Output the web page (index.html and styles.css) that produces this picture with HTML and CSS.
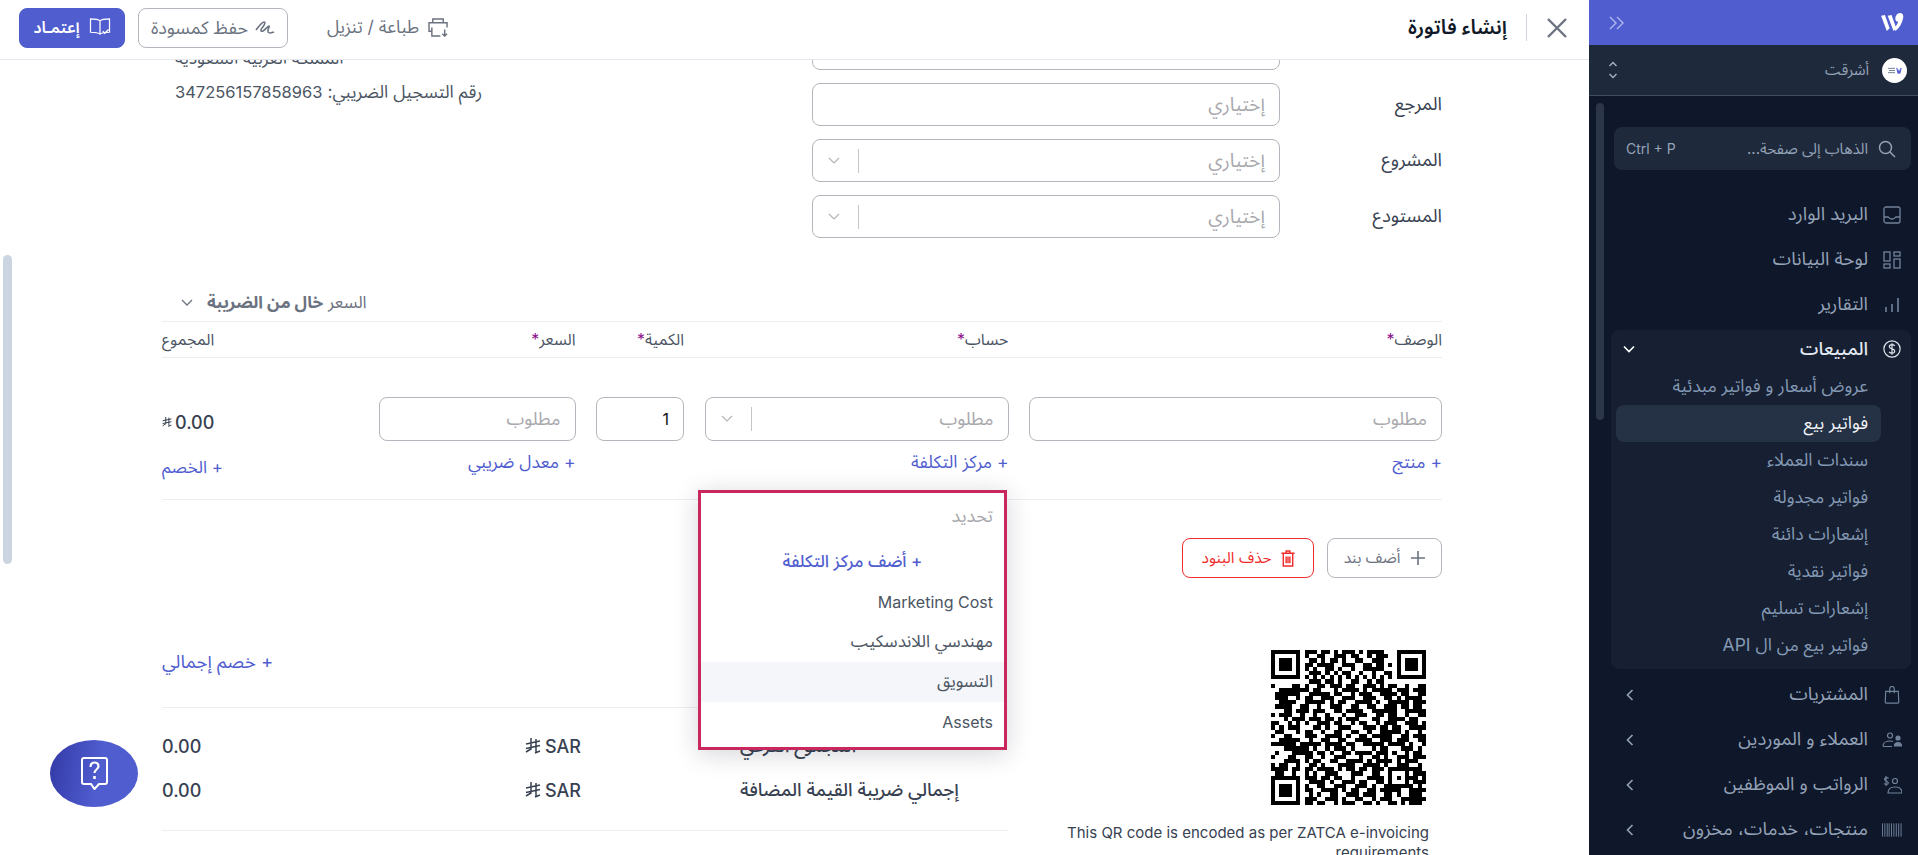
FILE: index.html
```html
<!DOCTYPE html>
<html lang="ar" dir="rtl">
<head>
<meta charset="utf-8">
<title>إنشاء فاتورة</title>
<link rel="stylesheet" href="styles.css">
</head>
<body>
<div class="app">
  <aside class="side">
    <div class="brand">
      <svg class="logo" viewBox="0 0 24 20" width="23" height="19"><path fill="#fff" d="M0 3l4-1 5 14-3 3zM7 3l4-1 5 14-3 3z"/><path fill="#fff" d="M15 6c0-3 2-6 5-6 3 0 4 3 3 6-1 5-4 10-8 13l-1-4c2-1 3-3 4-6-2 0-3-1-3-3z"/></svg>
      <svg class="expand" viewBox="0 0 16 14" width="16" height="14" fill="none" stroke="#aeb6ee" stroke-width="1.4"><path d="M1 1l6 6-6 6M8 1l6 6-6 6"/></svg>
    </div>
    <div class="org">
      <span class="org-logo"><svg viewBox="0 0 16 8" width="14" height="7"><rect x="0" y="1" width="8" height="1" fill="#64748b"/><rect x="1" y="3.500" width="7" height="1" fill="#64748b"/><rect x="0" y="6" width="8" height="1" fill="#64748b"/><path d="M10 1l1.500 6 1-3 1 3 1.500-6" fill="none" stroke="#505dcf" stroke-width="1.300"/></svg></span>
      <span class="org-name">أشرقت</span>
      <svg class="updown" viewBox="0 0 10 18" width="10" height="18" fill="none" stroke="#a3aebd" stroke-width="1.5"><path d="M1.5 5L5 1.5 8.5 5M1.5 13L5 16.5 8.5 13"/></svg>
    </div>
    <div class="side-body">
      <div class="search">
        <svg viewBox="0 0 18 18" width="18" height="18" fill="none" stroke="#94a3b8" stroke-width="1.5"><circle cx="7.5" cy="7.5" r="6"/><path d="M12 12l5 5"/></svg>
        <span class="search-text">الذهاب إلى صفحة...</span>
        <span class="search-key" dir="ltr">Ctrl + P</span>
      </div>
      <nav class="nav">
        <a class="item">
          <svg class="ic" viewBox="0 0 18 18" fill="none" stroke="#71839b" stroke-width="1.3"><rect x="1" y="1" width="16" height="16" rx="2"/><path d="M1 11h4c1 0 1 2 4 2s3-2 4-2h4"/></svg>
          <span>البريد الوارد</span>
        </a>
        <a class="item">
          <svg class="ic" viewBox="0 0 18 18" fill="none" stroke="#71839b" stroke-width="1.3"><rect x="1" y="1" width="6" height="9"/><rect x="11" y="1" width="6" height="4"/><rect x="1" y="13" width="6" height="4"/><rect x="11" y="8" width="6" height="9"/></svg>
          <span>لوحة البيانات</span>
        </a>
        <a class="item">
          <svg class="ic" viewBox="0 0 18 18" fill="none" stroke="#71839b" stroke-width="1.6"><path d="M3 16v-5M9 16V8M15 16V2"/></svg>
          <span>التقارير</span>
        </a>
        <div class="group">
          <a class="item head">
            <svg class="ic" viewBox="0 0 20 20" fill="none" stroke="#e2e8f0" stroke-width="1.3"><circle cx="10" cy="10" r="9"/><path d="M13 6.500c-.6-1-1.700-1.300-3-1.300-1.700 0-3 .8-3 2.300 0 3.200 6 1.500 6 4.800 0 1.500-1.400 2.400-3 2.400-1.400 0-2.500-.4-3.200-1.500M10 3.500v13"/></svg>
            <span>المبيعات</span>
            <svg class="chev" viewBox="0 0 12 12" fill="none" stroke="#fff" stroke-width="1.6"><path d="M1 3.500l5 5 5-5"/></svg>
          </a>
          <a class="sub">عروض أسعار و فواتير مبدئية</a>
          <a class="sub active">فواتير بيع</a>
          <a class="sub">سندات العملاء</a>
          <a class="sub">فواتير مجدولة</a>
          <a class="sub">إشعارات دائنة</a>
          <a class="sub">فواتير نقدية</a>
          <a class="sub">إشعارات تسليم</a>
          <a class="sub">فواتير بيع من ال API</a>
        </div>
        <a class="item">
          <svg class="ic" viewBox="0 0 18 20" fill="none" stroke="#71839b" stroke-width="1.3"><path d="M2 6h14l.5 12a1 1 0 0 1-1 1h-13a1 1 0 0 1-1-1zM6.500 8V3a2.500 2.500 0 0 1 5 0v5"/></svg>
          <span>المشتريات</span>
          <svg class="chev" viewBox="0 0 12 12" fill="none" stroke="#94a3b8" stroke-width="1.6"><path d="M8.500 1l-5 5 5 5"/></svg>
        </a>
        <a class="item">
          <svg class="ic wide" viewBox="0 0 20 16" fill="none" stroke="#71839b" stroke-width="1.200"><circle cx="8" cy="3.500" r="2.500"/><path d="M1 14c0-3 3-5 7-5 1 0 2 .1 3 .5M1 14.500h9"/><circle cx="16" cy="6" r="2" fill="#71839b"/><path d="M12.500 14c0-2 1.500-3.500 3.500-3.500s3.500 1.500 3.500 3.500z" fill="#71839b"/></svg>
          <span>العملاء و الموردين</span>
          <svg class="chev" viewBox="0 0 12 12" fill="none" stroke="#94a3b8" stroke-width="1.6"><path d="M8.500 1l-5 5 5 5"/></svg>
        </a>
        <a class="item">
          <svg class="ic wide" viewBox="0 0 20 18" fill="none" stroke="#71839b" stroke-width="1.200"><path d="M6.500 2.500C6 1.500 3 1 2.500 3c-.5 2 4 2 3.800 4-.2 1.800-3.500 1.700-4.300.5M4 0v10"/><circle cx="13" cy="5" r="2.500"/><path d="M6 17c0-4 3-6 7-6s7 2 7 6z"/></svg>
          <span>الرواتب و الموظفين</span>
          <svg class="chev" viewBox="0 0 12 12" fill="none" stroke="#94a3b8" stroke-width="1.6"><path d="M8.500 1l-5 5 5 5"/></svg>
        </a>
        <a class="item">
          <svg class="ic wide" viewBox="0 0 21 14" fill="none" stroke="#71839b" stroke-width="1"><path d="M.5 0v14M3 0v14M5.500 0v14M7.500 0v14M10 0v14M12.500 0v14M15 0v14M17.500 0v14M20 0v14"/></svg>
          <span>منتجات، خدمات، مخزون</span>
          <svg class="chev" viewBox="0 0 12 12" fill="none" stroke="#94a3b8" stroke-width="1.6"><path d="M8.500 1l-5 5 5 5"/></svg>
        </a>
      </nav>
      <span class="side-thumb"></span>
    </div>
  </aside>

  <main class="main">
    <header class="top">
      <svg class="close" viewBox="0 0 20 20" width="20" height="20" fill="none" stroke="#6b7280" stroke-width="2.400"><path d="M1 1l18 18M19 1L1 19"/></svg>
      <span class="top-div"></span>
      <h1 class="title">إنشاء فاتورة</h1>
      <span class="print">
        <svg viewBox="0 0 22 20" width="21" height="19" fill="none" stroke="#6b7280" stroke-width="1.500"><path d="M5 5V1h11v4M4 14H1V5h19v5M4 10v9h9"/><path d="M17.500 12v7M15 16.500l2.500 2.500 2.500-2.500"/></svg>
        طباعة / تنزيل
      </span>
      <button class="btn draft">
        <svg viewBox="0 0 20 14" width="20" height="14" fill="none" stroke="#6b7280" stroke-width="1.600"><path d="M1 9C4 5 7 1 9 1s0 4-2 6-1 4 1 3 5-5 6-5-2 4-1 6 3 1 6 0"/></svg>
        حفظ كمسودة
      </button>
      <button class="btn approve">
        <svg viewBox="0 0 22 20" width="22" height="19" fill="none" stroke="#fff" stroke-width="1.300"><path d="M11 3c-2-2-5-2-10-2v14c5 0 8 0 10 2 2-2 5-2 10-2V1c-5 0-8 0-10 2zM11 3v14"/><path d="M14 14l2 2 4-4" stroke-width="1.500"/></svg>
        إعتمـاد
      </button>
    </header>

    <div class="scroll">
      <div class="sheet">
        <section class="meta">
          <div class="form">
            <span class="label"></span><div class="field"></div>
            <span class="label">المرجع</span><div class="field"><span class="ph">إختياري</span></div>
            <span class="label">المشروع</span><div class="field"><span class="ph">إختياري</span><i class="sep"></i><svg class="dd" viewBox="0 0 12 8" fill="none" stroke="#b3b3b8" stroke-width="1.200"><path d="M1 1l5 5 5-5"/></svg></div>
            <span class="label">المستودع</span><div class="field"><span class="ph">إختياري</span><i class="sep"></i><svg class="dd" viewBox="0 0 12 8" fill="none" stroke="#b3b3b8" stroke-width="1.200"><path d="M1 1l5 5 5-5"/></svg></div>
          </div>
          <div class="addr">
            <p>المملكة العربية السعودية</p>
            <p>رقم التسجيل الضريبي: <span class="num">347256157858963</span></p>
          </div>
        </section>

        <div class="tax">
          <span>السعر <b>خال من الضريبة</b></span>
          <svg viewBox="0 0 12 8" width="12" height="8" fill="none" stroke="#6b7280" stroke-width="1.300"><path d="M1 1l5 5 5-5"/></svg>
        </div>

        <div class="cols head-row">
          <span>الوصف<em>*</em></span>
          <span>حساب<em>*</em></span>
          <span>الكمية<em>*</em></span>
          <span>السعر<em>*</em></span>
          <span class="end">المجموع</span>
        </div>

        <div class="cols line">
          <div class="cell">
            <div class="field"><span class="ph req">مطلوب</span></div>
            <a class="link">+ منتج</a>
          </div>
          <div class="cell">
            <div class="field"><span class="ph req">مطلوب</span><i class="sep"></i><svg class="dd" viewBox="0 0 12 8" fill="none" stroke="#b3b3b8" stroke-width="1.200"><path d="M1 1l5 5 5-5"/></svg></div>
            <a class="link">+ مركز التكلفة</a>
          </div>
          <div class="cell">
            <div class="field"><span class="val">1</span></div>
          </div>
          <div class="cell">
            <div class="field"><span class="ph req">مطلوب</span></div>
            <a class="link">+ معدل ضريبي</a>
          </div>
          <div class="cell sum">
            <div class="amount" dir="ltr">
              <svg class="riyal small" viewBox="0 0 16 16" fill="none" stroke="currentColor" stroke-width="1.600"><path d="M6 0v11l-5 3M11 1v13M1 6l14-3M1 10.500l14-3M10 15l5-2"/></svg>
              <span>0.00</span>
            </div>
            <a class="link disc">+ الخصم</a>
          </div>
        </div>

        <div class="actions">
          <button class="btn add">
            <svg viewBox="0 0 14 14" width="14" height="14" fill="none" stroke="#6b7280" stroke-width="1.600"><path d="M7 0v14M0 7h14"/></svg>
            أضف بند
          </button>
          <button class="btn del">
            <svg viewBox="0 0 14 18" width="14" height="17" fill="none" stroke="#ef2b2b" stroke-width="1.500"><path d="M0 3.500h14M5 3V1h4v2M2 4v13h10V4M5 7v7M7 7v7M9 7v7"/></svg>
            حذف البنود
          </button>
        </div>

        <section class="bottom">
          <div class="qr-box">
            <svg class="qr" viewBox="0 0 37 37" shape-rendering="crispEdges">
              <path fill-rule="evenodd" d="M0 0h7v7h-7zM1 1v5h5v-5zM2 2h3v3h-3zM30 0h7v7h-7zM31 1v5h5v-5zM32 2h3v3h-3zM0 30h7v7h-7zM1 31v5h5v-5zM2 32h3v3h-3zM28 28h5v5h-5zM29 29v3h3v-3zM30 30h1v1h-1z"/>
              <path fill="none" stroke="#000" d="M8 .5h3M12 .5h2M15 .5h1M17 .5h3M21 .5h1M23 .5h4M8 1.500h1M11 1.500h2M15 1.500h3M19 1.500h2M23 1.500h1M25 1.500h3M9 2.500h2M12 2.500h1M14 2.500h2M17 2.500h1M20 2.500h2M24 2.500h3M8 3.500h2M11 3.500h4M17 3.500h3M22 3.500h2M25 3.500h2M28 3.500h1M8 4.500h1M10 4.500h1M13 4.500h2M16 4.500h1M19 4.500h1M22 4.500h5M9 5.500h3M13 5.500h1M15 5.500h1M17 5.500h2M21 5.500h1M24 5.500h1M27 5.500h2M8 6.500h1M10 6.500h1M12 6.500h1M14 6.500h1M16 6.500h1M18 6.500h1M20 6.500h1M22 6.500h1M24 6.500h1M26 6.500h1M28 6.500h1M9 7.500h3M13 7.500h2M16 7.500h1M19 7.500h2M23 7.500h1M25 7.500h2M0 8.500h1M5 8.500h2M8 8.500h1M11 8.500h2M14 8.500h3M18 8.500h2M22 8.500h3M26 8.500h1M28 8.500h2M32 8.500h1M35 8.500h2M2 9.500h7M10 9.500h2M15 9.500h1M17 9.500h4M22 9.500h1M24 9.500h5M30 9.500h3M34 9.500h3M1 10.500h6M9 10.500h5M15 10.500h2M19 10.500h1M21 10.500h3M26 10.500h4M31 10.500h2M35 10.500h2M1 11.500h3M6 11.500h1M8 11.500h2M12 11.500h3M17 11.500h3M22 11.500h3M27 11.500h2M30 11.500h1M32 11.500h4M2 12.500h4M8 12.500h5M14 12.500h1M16 12.500h2M20 12.500h4M25 12.500h1M28 12.500h5M34 12.500h3M1 13.500h4M7 13.500h2M11 13.500h1M14 13.500h3M19 13.500h2M23 13.500h2M27 13.500h3M31 13.500h2M34 13.500h2M3 14.500h2M6 14.500h3M10 14.500h3M15 14.500h2M18 14.500h4M24 14.500h6M32 14.500h5M0 15.500h1M2 15.500h3M7 15.500h1M10 15.500h1M13 15.500h1M17 15.500h1M20 15.500h3M25 15.500h2M28 15.500h2M32 15.500h1M35 15.500h2M3 16.500h1M5 16.500h3M9 16.500h3M13 16.500h2M16 16.500h1M18 16.500h3M24 16.500h2M28 16.500h4M33 16.500h2M0 17.500h2M4 17.500h1M6 17.500h1M8 17.500h1M11 17.500h3M15 17.500h2M19 17.500h1M21 17.500h2M25 17.500h1M27 17.500h3M32 17.500h3M36 17.500h1M0 18.500h1M2 18.500h1M4 18.500h3M10 18.500h2M13 18.500h1M16 18.500h3M22 18.500h3M26 18.500h2M29 18.500h2M33 18.500h4M1 19.500h2M6 19.500h1M8 19.500h2M12 19.500h1M15 19.500h2M19 19.500h2M23 19.500h1M26 19.500h5M32 19.500h1M35 19.500h1M0 20.500h1M3 20.500h2M8 20.500h3M13 20.500h4M18 20.500h1M21 20.500h2M24 20.500h5M31 20.500h2M34 20.500h3M2 21.500h5M9 21.500h1M12 21.500h2M16 21.500h2M20 21.500h4M26 21.500h3M30 21.500h3M35 21.500h2M0 22.500h6M7 22.500h5M13 22.500h4M18 22.500h2M22 22.500h5M28 22.500h4M33 22.500h1M36 22.500h1M3 23.500h6M10 23.500h1M13 23.500h1M15 23.500h3M19 23.500h1M24 23.500h1M26 23.500h2M31 23.500h3M35 23.500h1M1 24.500h1M5 24.500h5M11 24.500h2M14 24.500h1M17 24.500h2M20 24.500h4M25 24.500h3M29 24.500h1M32 24.500h1M34 24.500h2M0 25.500h1M4 25.500h2M8 25.500h2M12 25.500h1M15 25.500h3M21 25.500h1M24 25.500h2M27 25.500h1M30 25.500h3M34 25.500h3M3 26.500h4M8 26.500h1M10 26.500h2M14 26.500h2M18 26.500h4M23 26.500h1M25 26.500h4M30 26.500h1M32 26.500h3M0 27.500h1M2 27.500h2M6 27.500h1M9 27.500h2M12 27.500h1M16 27.500h4M22 27.500h4M27 27.500h1M30 27.500h3M35 27.500h1M0 28.500h4M5 28.500h2M8 28.500h2M11 28.500h4M16 28.500h1M18 28.500h2M21 28.500h2M24 28.500h3M33 28.500h3M1 29.500h2M5 29.500h1M8 29.500h1M10 29.500h1M13 29.500h3M19 29.500h3M24 29.500h2M34 29.500h3M8 30.500h3M12 30.500h2M15 30.500h2M19 30.500h1M23 30.500h4M33 30.500h2M36 30.500h1M9 31.500h4M14 31.500h1M17 31.500h3M21 31.500h2M25 31.500h2M34 31.500h3M8 32.500h1M11 32.500h2M15 32.500h3M20 32.500h3M24 32.500h1M27 32.500h1M33 32.500h1M35 32.500h1M8 33.500h2M12 33.500h4M17 33.500h1M19 33.500h2M23 33.500h2M26 33.500h5M33 33.500h4M9 34.500h1M11 34.500h1M14 34.500h2M18 34.500h3M22 34.500h3M27 34.500h2M30 34.500h1M33 34.500h3M8 35.500h3M13 35.500h3M17 35.500h1M20 35.500h2M24 35.500h1M26 35.500h3M31 35.500h6M8 36.500h2M11 36.500h2M15 36.500h1M17 36.500h3M22 36.500h2M25 36.500h1M28 36.500h2M31 36.500h1M33 36.500h3"/>
            </svg>
            <p class="qr-note">This QR code is encoded as per ZATCA e-invoicing requirements</p>
          </div>
          <div class="totals">
            <div class="disc-row"><a class="link">+ خصم إجمالي</a></div>
            <div class="tot-rows">
              <div class="tot">
                <span class="t-label">المجموع الفرعي</span>
                <span class="t-gap"></span>
                <span class="t-cur" dir="ltr"><svg class="riyal" viewBox="0 0 16 16" fill="none" stroke="currentColor" stroke-width="1.500"><path d="M6 0v11l-5 3M11 1v13M1 6l14-3M1 10.500l14-3M10 15l5-2"/></svg> SAR</span>
                <span class="t-val" dir="ltr">0.00</span>
              </div>
              <div class="tot">
                <span class="t-label">إجمالي ضريبة القيمة المضافة</span>
                <span class="t-gap"></span>
                <span class="t-cur" dir="ltr"><svg class="riyal" viewBox="0 0 16 16" fill="none" stroke="currentColor" stroke-width="1.500"><path d="M6 0v11l-5 3M11 1v13M1 6l14-3M1 10.500l14-3M10 15l5-2"/></svg> SAR</span>
                <span class="t-val" dir="ltr">0.00</span>
              </div>
            </div>
          </div>
        </section>
      </div>
    </div>

    <div class="menu">
      <div class="opt muted">تحديد</div>
      <div class="opt create">+ أضف مركز التكلفة</div>
      <div class="opt lat">Marketing Cost</div>
      <div class="opt">مهندسي اللاندسكيب</div>
      <div class="opt hover">التسويق</div>
      <div class="opt lat">Assets</div>
    </div>

    <span class="main-thumb"></span>
    <button class="fab">
      <svg viewBox="0 0 27 33" width="27" height="33" fill="none" stroke="#fff" stroke-width="2"><path d="M3 1h21a2 2 0 0 1 2 2v22a2 2 0 0 1-2 2h-6l-4.500 5L10 27H3a2 2 0 0 1-2-2V3a2 2 0 0 1 2-2z"/><path d="M9.500 10c0-3 1.700-4.500 4-4.500s4 1.500 4 3.800c0 3.200-4 3.200-4 6.700" stroke-width="2.200"/><path d="M13.500 19v3" stroke-width="2.600"/></svg>
    </button>
  </main>
</div>
</body>
</html>
```

FILE: styles.css
```css
* { box-sizing: border-box; }
html, body { margin: 0; height: 100%; overflow: hidden; }
body { font-family: Inter, "Noto Sans Arabic", "Noto Sans", sans-serif; background: #fff; color: #374151; font-size: 15px; }
p, h1 { margin: 0; }
a { text-decoration: none; }
button { font-family: inherit; cursor: pointer; }

.app { display: flex; height: 855px; }

/* Sidebar */
.side { width: 329px; flex: none; background: #0f172a; display: flex; flex-direction: column; }
.brand { height: 45px; background: #505dcf; display: flex; align-items: center; justify-content: space-between; padding: 0 14px 0 20px; flex: none; }
.org { height: 51px; background: #1e293b; border-bottom: 1px solid #414c5e; display: flex; align-items: center; padding: 0 11px 0 19px; gap: 13px; flex: none; }
.org-logo { width: 25px; height: 25px; border-radius: 50%; background: #fff; display: flex; align-items: center; justify-content: center; }
.org-name { font-size: 15px; color: #94a3b8; flex: 1; }
.side-body { position: relative; flex: 1; padding: 31px 7px 0 22px; min-height: 0; }
.side-thumb { position: absolute; top: 7px; left: 7px; width: 8px; height: 317px; border-radius: 4px; background: #2b3749; }
.search { height: 43px; margin-left: 3px; padding: 0 15px 0 12px; background: #1e293b; border-radius: 8px; display: flex; align-items: center; gap: 10px; color: #94a3b8; font-size: 14px; }
.search-text { flex: 1; font-size: 15px; }
.nav { margin-top: 22px; display: flex; flex-direction: column; }
.item { height: 45px; display: flex; align-items: center; padding: 0 10px 0 13px; color: #94a3b8; font-size: 18.5px; flex: none; }
.item span { flex: 1; }
.ic { width: 18px; height: 18px; margin-left: 15px; flex: none; }
.ic.wide { width: 20px; margin-right: -1px; margin-left: 14px; }
.chev { width: 12px; height: 12px; flex: none; }
.group { margin: 3px 0 3px; background: #162032; border-radius: 8px; padding-bottom: 5px; }
.head { height: 38px; color: #e2e8f0; font-weight: 500; padding-left: 12px; }
.sub { display: flex; align-items: center; height: 37px; margin: 0 30px 0 5px; padding-right: 13px; color: #8499b4; font-size: 17.5px; border-radius: 8px; }
.sub.active { background: #253144; color: #f1f5f9; }

/* Main */
.main { flex: 1; min-width: 0; position: relative; display: flex; flex-direction: column; }
.top { height: 60px; flex: none; border-bottom: 1px solid #e7e7f0; display: flex; align-items: center; padding: 0 22px 4px 19px; background: #fff; position: relative; z-index: 1; }
.close { flex: none; }
.top-div { width: 1px; height: 27px; background: #d1d5db; margin: 0 20px 0 19px; }
.title { font-size: 20px; font-weight: 600; color: #111827; flex: 1; }
.print { display: flex; align-items: center; gap: 9px; font-size: 17.5px; color: #6b7280; margin-left: 39px; }
.btn { height: 40px; border-radius: 8px; border: 1px solid #b5b5bd; background: #fff; display: flex; align-items: center; justify-content: center; gap: 9px; font-size: 16px; color: #6b7280; padding: 0; }
.draft { width: 150px; margin-left: 13px; font-size: 18px; gap: 7px; }
.approve { width: 106px; background: #505dcf; border-color: #505dcf; color: #fff; font-weight: 600; font-size: 16px; }

.scroll { flex: 1; min-height: 0; overflow: hidden; }
.sheet { margin-top: -33px; padding: 0 147px 0 162px; }

.meta { display: flex; justify-content: space-between; }
.form { width: 630px; display: grid; grid-template-columns: 162px 468px; grid-auto-rows: 43px; row-gap: 13px; align-items: center; }
.label { font-size: 18.5px; color: #374151; }
.field { height: 43px; border: 1px solid #b5b5bd; border-radius: 8px; display: flex; align-items: center; padding: 0 14px; background: #fff; }
.ph { color: #a8a8ad; font-size: 19px; flex: 1; }
.ph.req { font-size: 18px; }
.val { color: #111; font-size: 16px; flex: 1; }
.sep { width: 1px; height: 24px; background: #c4c4c8; margin-left: 18px; }
.dd { width: 12px; height: 8px; flex: none; margin-left: 1px; }
.addr { margin-left: 13px; padding-top: 14px; text-align: left; font-size: 17.5px; line-height: 34px; color: #4b5563; }
.num { font-size: 16.5px; }

.tax { margin-top: 55px; height: 20px; display: flex; flex-direction: row-reverse; align-items: center; justify-content: flex-end; gap: 14px; color: #6b7280; font-size: 17px; direction: ltr; padding-left: 19px; }
.tax span { direction: rtl; }
.tax b { font-weight: 700; }

.cols { display: grid; grid-template-columns: 413px 304px 88px 197px 1fr; column-gap: 20.5px; }
.head-row { margin-top: 8px; height: 37px; border-top: 1px solid #eeeef2; border-bottom: 1px solid #eeeef2; align-items: center; font-size: 16px; color: #4b5563; }
.head-row em { color: #8b0f8b; font-style: normal; }
.end { text-align: left; }
.line { padding-top: 39px; height: 142px; border-bottom: 1px solid #eeeef2; }
.cell .field { height: 44px; }
.link { display: block; margin-top: 10px; color: #505dcf; font-size: 17.5px; line-height: 22px; }
.cell.sum { display: flex; flex-direction: column; align-items: flex-end; }
.amount { height: 44px; display: flex; align-items: center; justify-content: flex-start; gap: 3px; padding-top: 6px; font-size: 18px; font-weight: 500; color: #374151; width: 100%; }
.link.disc { margin-top: 15px; align-self: flex-end; font-size: 17px; }

.actions { display: flex; gap: 13px; margin-top: 38px; }
.add { width: 115px; height: 40px; gap: 11px; font-size: 15.5px; }
.del { width: 132px; height: 40px; border-color: #ef2b2b; color: #ef2b2b; gap: 9px; font-size: 15.5px; }

.bottom { display: flex; justify-content: space-between; margin-top: 72px; }
.qr-box { width: 370px; margin-right: 13px; }
.qr { display: block; width: 155px; height: 155px; margin-right: 3px; }
.qr-note { margin-top: 18px; font-size: 15px; line-height: 20px; color: #374151; text-align: right; direction: ltr; }
.totals { width: 846px; }
.disc-row { height: 58px; border-bottom: 1px solid #eeeef2; text-align: left; }
.disc-row .link { margin-top: 0; font-size: 18.5px; }
.tot-rows { padding: 16px 49px 18px 0; border-bottom: 1px solid #eeeef2; }
.tot { height: 44px; display: grid; grid-template-columns: 219px 157px 58px 1fr; align-items: center; font-size: 18.4px; font-weight: 500; color: #374151; }
.t-label { text-align: left; }
.t-cur { display: flex; align-items: center; gap: 4px; font-size: 18px; }
.t-val { text-align: left; font-size: 18px; }
.riyal { width: 16px; height: 16px; flex: none; }
.riyal.small { width: 10px; height: 10px; }

.menu { position: absolute; left: 698px; top: 490px; width: 309px; height: 260px; background: #fff; border: 3px solid #c9285f; box-shadow: 0 4px 24px rgba(15, 23, 42, .18); }
.opt { height: 40px; display: flex; align-items: center; padding: 0 11px; font-size: 17px; color: #4b5563; }
.opt.lat { font-size: 16px; }
.opt.muted { color: #a8a8ad; margin-top: 3px; font-size: 18px; }
.opt.create { justify-content: center; color: #505dcf; font-weight: 500; margin-top: 6px; font-size: 17px; }
.opt.hover { background: #f4f6fa; }

.main-thumb { position: absolute; left: 3px; top: 255px; width: 9px; height: 309px; border-radius: 5px; background: #cbd5e1; }
.fab { position: absolute; left: 50px; top: 740px; width: 88px; height: 67px; border: 0; border-radius: 50%; background: linear-gradient(100deg, #3339a6 0%, #505dcf 55%); display: flex; align-items: center; justify-content: center; padding: 0; }
```
